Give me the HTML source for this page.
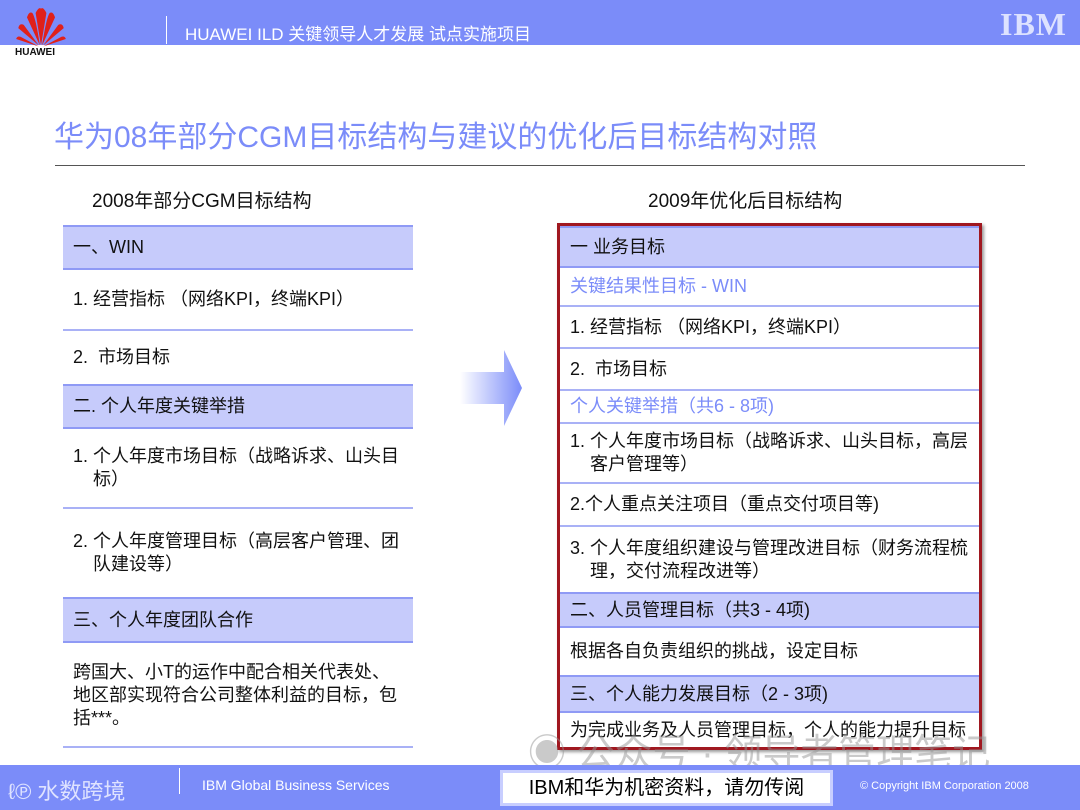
<!DOCTYPE html><html><head><meta charset="utf-8"><style>
*{margin:0;padding:0;box-sizing:border-box}
body{width:1080px;height:810px;position:relative;background:#fff;font-family:"Liberation Sans","Noto Sans CJK SC",sans-serif;overflow:hidden;color:#111}
.a{position:absolute}
.hdr{left:0;top:0;width:1080px;height:45px;background:#7b8cf9}
.ftr{left:0;top:765px;width:1080px;height:45px;background:#7b8cf9}
.r{position:absolute;font-size:18px;display:flex;align-items:center;padding-left:10px;line-height:23px}
.h{background:#c6cbfb;border-top:2px solid #8f9af5;border-bottom:2px solid #8f9af5}
.b{border-bottom:2px solid #a9b1f6}
.blue{color:#7b8cf9}
</style></head><body>
<div class="a hdr"></div>
<svg class="a" style="left:14px;top:4px" width="54" height="44" viewBox="0 0 50 40">
<g fill="#e0201a"><path d="M25 38 L20 8 Q23 2 25 4 Q27 2 30 8Z"/><path d="M24 38 L12 12 Q14 6 17 8 Q20 12 24 38Z"/><path d="M26 38 L38 12 Q36 6 33 8 Q30 12 26 38Z"/><path d="M23 38 L4 22 Q5 17 9 19Z"/><path d="M27 38 L46 22 Q45 17 41 19Z"/><path d="M23 39 L2 32 Q3 29 6 30Z"/><path d="M27 39 L48 32 Q47 29 44 30Z"/></g></svg>
<div class="a" style="left:15px;top:47px;font-size:10px;font-weight:bold">HUAWEI</div>
<div class="a" style="left:166px;top:16px;width:1px;height:28px;background:#fff"></div>
<div class="a" style="left:185px;top:20px;color:#fff;font-size:17px">HUAWEI ILD 关键领导人才发展 试点实施项目</div>
<div class="a" style="left:1000px;top:6px;color:#dde2ff;font-size:32px;font-weight:bold;letter-spacing:1px;font-family:'Liberation Serif',serif">IBM</div>
<div class="a blue" style="left:54px;top:112px;font-size:30px">华为08年部分CGM目标结构与建议的优化后目标结构对照</div>
<div class="a" style="left:55px;top:165px;width:970px;height:1px;background:#555"></div>
<div class="a" style="left:92px;top:186px;font-size:19px">2008年部分CGM目标结构</div>
<div class="a" style="left:648px;top:186px;font-size:19px">2009年优化后目标结构</div>
<div class="r h" style="left:63px;top:225px;width:350px;height:45px">一、WIN</div>
<div class="r b" style="left:63px;top:270px;width:350px;height:61px">1. 经营指标 （网络KPI，终端KPI）</div>
<div class="r" style="left:63px;top:331px;width:350px;height:53px">2.&nbsp; 市场目标</div>
<div class="r h" style="left:63px;top:384px;width:350px;height:45px">二. 个人年度关键举措</div>
<div class="r b" style="left:63px;top:429px;width:350px;height:80px;padding-left:10px">1. 个人年度市场目标（战略诉求、山头目<br>&nbsp;&nbsp;&nbsp;&nbsp;标）</div>
<div class="r" style="left:63px;top:509px;width:350px;height:88px">2. 个人年度管理目标（高层客户管理、团<br>&nbsp;&nbsp;&nbsp;&nbsp;队建设等）</div>
<div class="r h" style="left:63px;top:597px;width:350px;height:46px">三、个人年度团队合作</div>
<div class="r b" style="left:63px;top:643px;width:350px;height:105px;align-items:flex-start;padding-top:18px">跨国大、小T的运作中配合相关代表处、<br>地区部实现符合公司整体利益的目标，包<br>括***。</div>
<svg class="a" style="left:460px;top:350px" width="64" height="80"><defs><linearGradient id="g"><stop offset="0" stop-color="#fff"/><stop offset="1" stop-color="#7b8cf9"/></linearGradient></defs><path d="M0 22 H44 V0 L62 38 L44 76 V54 H0Z" fill="url(#g)"/></svg>
<div class="a" style="left:557px;top:223px;width:425px;height:527px;border:3px solid #a01820;box-shadow:2px 2px 3px #999"></div>
<div class="r h" style="left:560px;top:226px;width:419px;height:42px">一 业务目标</div>
<div class="r b blue" style="left:560px;top:268px;width:419px;height:39px">关键结果性目标 - WIN</div>
<div class="r b" style="left:560px;top:307px;width:419px;height:42px">1. 经营指标 （网络KPI，终端KPI）</div>
<div class="r b" style="left:560px;top:349px;width:419px;height:42px">2.&nbsp; 市场目标</div>
<div class="r b blue" style="left:560px;top:391px;width:419px;height:33px">个人关键举措（共6 - 8项)</div>
<div class="r b" style="left:560px;top:424px;width:419px;height:60px">1. 个人年度市场目标（战略诉求、山头目标，高层<br>&nbsp;&nbsp;&nbsp;&nbsp;客户管理等）</div>
<div class="r b" style="left:560px;top:484px;width:419px;height:43px">2.个人重点关注项目（重点交付项目等)</div>
<div class="r" style="left:560px;top:527px;width:419px;height:66px">3. 个人年度组织建设与管理改进目标（财务流程梳<br>&nbsp;&nbsp;&nbsp;&nbsp;理，交付流程改进等）</div>
<div class="r h" style="left:560px;top:592px;width:419px;height:36px">二、人员管理目标（共3 - 4项)</div>
<div class="r" style="left:560px;top:628px;width:419px;height:47px">根据各自负责组织的挑战，设定目标</div>
<div class="r h" style="left:560px;top:675px;width:419px;height:38px">三、个人能力发展目标（2 - 3项)</div>
<div class="r" style="left:560px;top:713px;width:419px;height:35px">为完成业务及人员管理目标，个人的能力提升目标</div>
<div class="a" style="left:528px;top:722px;font-size:38px;color:rgba(150,150,150,.5);white-space:nowrap">◉ 公众号 · 领导者管理笔记</div>
<div class="a ftr"></div>
<div class="a" style="left:8px;top:774px;color:#dfe3ff;font-size:22px">ℓ℗ 水数跨境</div>
<div class="a" style="left:179px;top:768px;width:1px;height:26px;background:#fff"></div>
<div class="a" style="left:202px;top:777px;color:#fff;font-size:14px">IBM Global Business Services</div>
<div class="a" style="left:500px;top:770px;width:333px;height:36px;border:3px solid #c8ceff;background:#7b8cf9"></div>
<div class="a" style="left:503px;top:773px;width:327px;height:30px;background:#fff;color:#000;font-size:20px;text-align:center;line-height:30px">IBM和华为机密资料，请勿传阅</div>
<div class="a" style="left:860px;top:780px;color:#fff;font-size:11px">© Copyright IBM Corporation 2008</div>
</body></html>
